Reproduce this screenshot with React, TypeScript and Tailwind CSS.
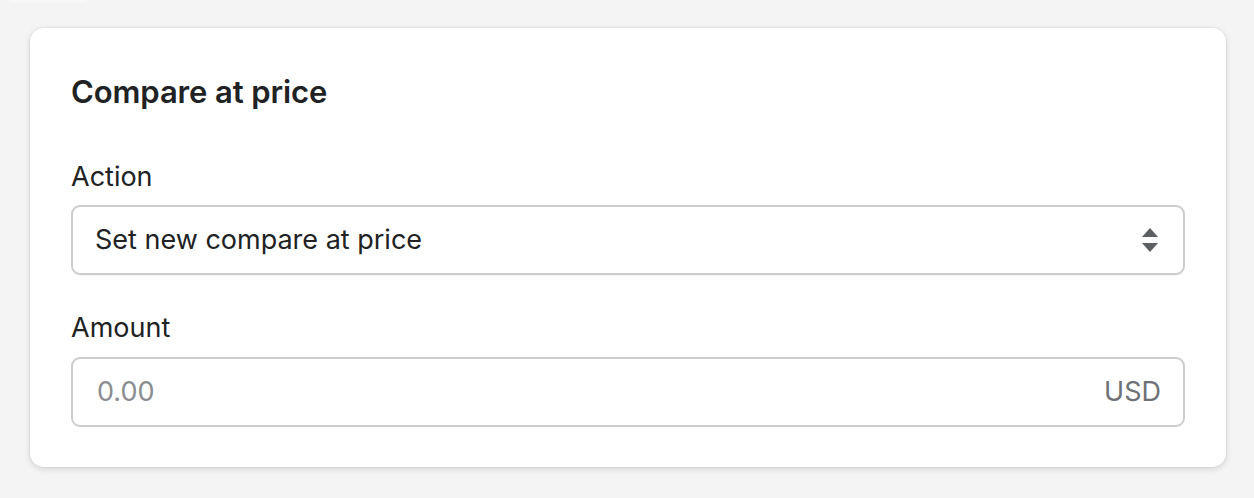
import React from "react";

const font = { fontFamily: "Inter, 'Noto Sans', sans-serif" };

function SelectArrows() {
  return (
    <svg width="20" height="26" viewBox="0 0 20 26" className="text-[#5c5f62]">
      <path d="M10 1 L18 10 H2 Z" fill="currentColor" />
      <path d="M10 25 L18 16 H2 Z" fill="currentColor" />
    </svg>
  );
}

export default function App() {
  return (
    <div className="w-[1254px] h-[498px] bg-[#f4f4f5] overflow-hidden relative" style={font}>
      <div className="absolute left-0 top-[-20px] w-[96px] h-[23px] rounded-b-[14px] bg-[#f7f7f8]" />
      <div className="pl-[30px] pr-[28px] pt-[28px]">
        <div className="bg-white rounded-[14px] shadow-[0_0_0_1px_rgba(63,63,68,0.05),0_2px_6px_rgba(63,63,68,0.17)] px-[41px] pt-[42px] pb-[40px]">
          <h2 className="text-[31px] leading-[44px] font-semibold text-[#202223] tracking-[-0.1px]">
            Compare at price
          </h2>
          <div className="mt-[43px]">
            <label className="block text-[27px] leading-[40px] text-[#202223] mb-[8px]">Action</label>
            <div className="h-[70px] border-2 border-[#cbcccd] rounded-[9px] flex items-center pl-[22px] pr-[23px] shadow-[0_1px_0_rgba(0,0,0,0.04)]">
              <span className="flex-1 text-[27px] text-[#202223]">Set new compare at price</span>
              <SelectArrows />
            </div>
          </div>
          <div className="mt-[33px]">
            <label className="block text-[27px] leading-[40px] text-[#202223] mb-[9px]">Amount</label>
            <div className="h-[70px] border-2 border-[#cbcccd] rounded-[9px] flex items-center pl-[24px] pr-[22px]">
              <span className="flex-1 text-[27px] text-[#8a8d90]">0.00</span>
              <span className="text-[27px] text-[#6d7175]">USD</span>
            </div>
          </div>
        </div>
      </div>
    </div>
  );
}
